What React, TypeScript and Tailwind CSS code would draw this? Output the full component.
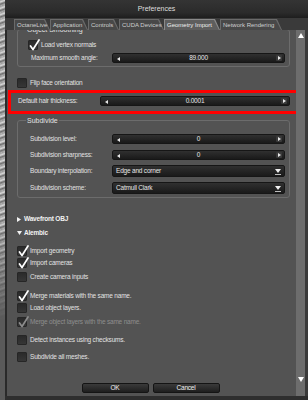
import React from 'react';

const TABS = [
  { label: 'OctaneLive', w: 36 },
  { label: 'Application', w: 38 },
  { label: 'Controls', w: 31 },
  { label: 'CUDA Devices', w: 45 },
  { label: 'Geometry Import', w: 56, active: true },
  { label: 'Network Rendering', w: 62 },
];

function Check({ checked, disabled }: { checked?: boolean; disabled?: boolean }) {
  return (
    <div className="relative w-[10px] h-[10px] shrink-0 rounded-[1px] border border-[#262626] bg-[linear-gradient(#2a2a2a,#363636)]">
      {checked && (
        <svg className="absolute left-[0px] top-[-2px]" width="11" height="12" viewBox="0 0 11 12">
          <path
            d="M1.5 7 L4 10.5 L10 1"
            fill="none"
            stroke={disabled ? '#8c8c8c' : '#ffffff'}
            strokeWidth="1.7"
            strokeLinecap="round"
            strokeLinejoin="round"
          />
        </svg>
      )}
    </div>
  );
}

function CheckRow({ label, checked, disabled, className = '' }: { label: string; checked?: boolean; disabled?: boolean; className?: string }) {
  return (
    <div className={`flex items-center h-[10px] gap-[3px] ${className}`}>
      <Check checked={checked} disabled={disabled} />
      <span className={disabled ? 'text-[#8e8e8e]' : 'text-[#e2e2e2]'}>{label}</span>
    </div>
  );
}

function Slider({ value, className = '' }: { value: string; className?: string }) {
  return (
    <div className={`relative flex items-center justify-center h-[10px] rounded-[2px] border border-[#161616] bg-[linear-gradient(#303030,#1a1a1a)] text-[#e6e6e6] ${className}`}>
      <svg className="absolute left-[4px] top-[2.5px]" width="3" height="4" viewBox="0 0 3 4">
        <path d="M3 0 L0 2 L3 4 Z" fill="#e8e8e8" />
      </svg>
      <span className="leading-none">{value}</span>
      <div className="absolute right-[2px] top-[1px] w-[6px] h-[6px] rounded-[1px] bg-[#3a3a3a] flex items-center justify-center">
        <svg width="3" height="4" viewBox="0 0 3 4">
          <path d="M0 0 L3 2 L0 4 Z" fill="#e8e8e8" />
        </svg>
      </div>
    </div>
  );
}

function Dropdown({ value }: { value: string }) {
  return (
    <div className="relative flex items-center h-[12px] flex-1 rounded-[2px] border border-[#161616] bg-[linear-gradient(#303030,#1a1a1a)] text-[#e6e6e6] pl-[3px]">
      <span className="leading-none">{value}</span>
      <svg className="absolute right-[3px] top-[3px]" width="6" height="6" viewBox="0 0 6 6">
        <path d="M0 0 L6 0 L3 4 Z" fill="#f0f0f0" />
        <rect x="0" y="5" width="6" height="1" fill="#bdbdbd" />
      </svg>
    </div>
  );
}

function FieldRow({ label, children, h = 'h-[10px]' }: { label: string; children: React.ReactNode; h?: string }) {
  return (
    <div className={`flex items-center ${h}`}>
      <span className="w-[82px] shrink-0 text-[#e2e2e2]">{label}</span>
      {children}
    </div>
  );
}

export default function App() {
  return (
    <div className="w-[308px] h-[400px] flex overflow-hidden bg-[#5a5a5a] font-['Liberation_Sans',Arial,sans-serif] text-[6.5px] tracking-[-0.2px] leading-none select-none">
      {/* desktop behind the window */}
      <div className="w-[5px] shrink-0 bg-[repeating-linear-gradient(160deg,#9a9a9a_0px,#d8d8d8_2px,#6f6f6f_4px,#b5b5b5_6px)] [mask-image:linear-gradient(#000_55%,transparent_80%)]" />

      <div className="flex-1 flex flex-col bg-[#2a2a2a]">
        {/* title bar */}
        <div className="h-[18px] shrink-0 flex items-center justify-center pb-[2px] bg-[linear-gradient(#343434,#2b2b2b_70%,#1e1e1e)] text-[7px] tracking-normal text-[#dedede]">
          Preferences
        </div>

        {/* tabs */}
        <div className="h-[12px] shrink-0 flex items-end pl-[9px] bg-[#3a3a3a]">
          {TABS.map(t => (
            <div
              key={t.label}
              className="relative h-[11px] shrink-0 flex items-center pl-[3px] pt-[1px] whitespace-nowrap text-[6px] tracking-normal"
              style={{ width: t.w }}
            >
              <div className={`absolute inset-0 [clip-path:polygon(0_0,calc(100%-5px)_0,100%_100%,0_100%)] ${t.active ? 'bg-[#8a8a8a]' : 'bg-[#6a6a6a]'}`} />
              <div className={`absolute left-[1px] top-[1px] right-[1px] bottom-0 [clip-path:polygon(0_0,calc(100%-5px)_0,100%_100%,0_100%)] ${t.active ? 'bg-[#5e5e5e]' : 'bg-[#484848]'}`} />
              <span className={`relative ${t.active ? 'text-[#f0f0f0]' : 'text-[#cfcfcf]'}`}>{t.label}</span>
            </div>
          ))}
        </div>

        {/* body */}
        <div className="flex-1 flex min-h-0">
          <div className="flex-1 ml-[2px] bg-[#535353] overflow-hidden flex flex-col pl-[10px] pr-[6px]">
            {/* Object Smoothing */}
            <div className="relative -mt-[1px] border border-[#6c6c6c] rounded-[3px] pt-[10px] pb-[3px] pl-[10px] pr-[4px] flex flex-col gap-[3px]">
              <span className="absolute left-[8px] -top-[4px] px-[1px] bg-[#535353] text-[7px] tracking-normal text-[#e2e2e2]">Object Smoothing</span>
              <CheckRow label="Load vertex normals" checked className="h-[10px]" />
              <div className="flex items-center h-[10px] pl-[3px]">
                <span className="w-[81px] shrink-0 text-[#e2e2e2]">Maximum smooth angle:</span>
                <Slider value="89.000" className="flex-1" />
              </div>
            </div>

            <CheckRow label="Flip face orientation" className="mt-[11px]" />

            {/* Default hair thickness */}
            <div className="relative mt-[8px] flex items-center h-[10px] pl-[1px]">
              <span className="w-[82px] shrink-0 text-[#e2e2e2]">Default hair thickness:</span>
              <Slider value="0.0001" className="flex-1" />
              <div className="absolute -left-[9px] -right-[10px] -top-[6px] -bottom-[8px] border-[3px] border-[#ff0000] pointer-events-none" />
            </div>

            {/* Subdivide */}
            <div className="relative mt-[14px] border border-[#6c6c6c] rounded-[3px] pt-[13px] pb-[3px] pl-[12px] pr-[4px] flex flex-col">
              <span className="absolute left-[8px] -top-[4px] px-[1px] bg-[#535353] text-[7px] tracking-normal text-[#e2e2e2]">Subdivide</span>
              <FieldRow label="Subdivision level:">
                <Slider value="0" className="flex-1" />
              </FieldRow>
              <div className="mt-[6px]">
                <FieldRow label="Subdivision sharpness:">
                  <Slider value="0" className="flex-1" />
                </FieldRow>
              </div>
              <div className="mt-[5px]">
                <FieldRow label="Boundary interpolation:" h="h-[12px]">
                  <Dropdown value="Edge and corner" />
                </FieldRow>
              </div>
              <div className="mt-[5px]">
                <FieldRow label="Subdivision scheme:" h="h-[12px]">
                  <Dropdown value="Catmull Clark" />
                </FieldRow>
              </div>
            </div>

            {/* Wavefront OBJ */}
            <div className="mt-[17px] h-[8px] flex items-center gap-[3px] font-bold text-[6.5px] text-[#f2f2f2]">
              <svg width="4" height="5" viewBox="0 0 4 5"><path d="M0 0 L4 2.5 L0 5 Z" fill="#f2f2f2" /></svg>
              <span>Wavefront OBJ</span>
            </div>
            <div className="mt-[6px] h-[8px] flex items-center gap-[2px] font-bold text-[6.5px] text-[#f2f2f2]">
              <svg width="5" height="4" viewBox="0 0 5 4"><path d="M0 0 L5 0 L2.5 4 Z" fill="#f2f2f2" /></svg>
              <span>Alembic</span>
            </div>

            <CheckRow label="Import geometry" checked className="mt-[9px]" />
            <CheckRow label="Import cameras" checked className="mt-[2px]" />
            <CheckRow label="Create camera inputs" className="mt-[4px]" />
            <CheckRow label="Merge materials with the same name." checked className="mt-[9px]" />
            <CheckRow label="Load object layers." className="mt-[2px]" />
            <CheckRow label="Merge object layers with the same name." checked disabled className="mt-[4px]" />
            <CheckRow label="Detect instances using checksums." className="mt-[8px]" />
            <CheckRow label="Subdivide all meshes." className="mt-[7px]" />

            <div className="mt-[21px] flex justify-center gap-[4px] pr-[6px]">
              <button className="w-[67px] h-[10px] rounded-[2px] border border-[#141414] bg-[linear-gradient(#3a3a3a,#1e1e1e)] text-[#f0f0f0] text-[6.5px] leading-none">OK</button>
              <button className="w-[67px] h-[10px] rounded-[2px] border border-[#141414] bg-[linear-gradient(#3a3a3a,#1e1e1e)] text-[#f0f0f0] text-[6.5px] leading-none">Cancel</button>
            </div>
          </div>

          {/* scrollbar */}
          <div className="w-[9px] shrink-0 flex flex-col items-center bg-[#6d6d6d] pb-[14px]">
            <svg className="mt-[3px]" width="6" height="5" viewBox="0 0 6 5"><path d="M3 0 L6 5 L0 5 Z" fill="#ffffff" /></svg>
            <div className="flex-1" />
            <svg width="6" height="5" viewBox="0 0 6 5"><path d="M0 0 L6 0 L3 5 Z" fill="#ffffff" /></svg>
          </div>
          <div className="w-[3px] shrink-0 bg-[#3a3a3a]" />
        </div>
        <div className="h-[4px] shrink-0 bg-[#2e2e2e]" />
      </div>
    </div>
  );
}
